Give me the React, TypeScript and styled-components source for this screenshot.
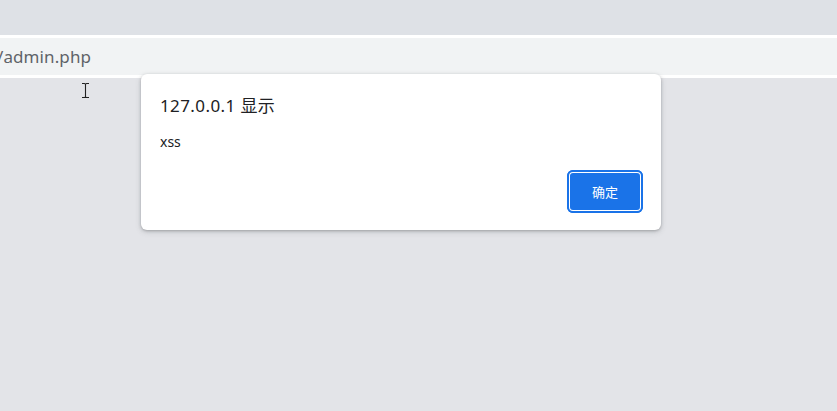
import React from "react";
import styled, { createGlobalStyle } from "styled-components";

const GlobalStyle = createGlobalStyle`
  html, body {
    margin: 0;
    padding: 0;
    background: #e3e4e8;
  }
  body {
    font-family: "Noto Sans", "Noto Sans CJK SC", sans-serif;
  }
`;

const App: React.FC = () => {
  return (
    <Screen>
      <GlobalStyle />
      <TabStrip />
      <Gap />
      <AddressBar>
        <Url>/admin.php</Url>
      </AddressBar>
      <Gap />
      <Page>
        <TextCursor width="9" height="17" viewBox="0 0 9 17">
          <path d="M1 1.5h2.5c.6 0 1 .4 1 1v12c0 .6.4 1 1 1H8M1 15.5h2.5c.6 0 1-.4 1-1M4.5 2.5c0-.6.4-1 1-1H8" fill="none" stroke="#222" strokeWidth="1.1" />
        </TextCursor>
      </Page>
      <Dialog>
        <Title>127.0.0.1 显示</Title>
        <Message>xss</Message>
        <Actions>
          <OkButton>确定</OkButton>
        </Actions>
      </Dialog>
    </Screen>
  );
};

export default App;

const Screen = styled.div`
  position: relative;
  display: flex;
  flex-direction: column;
  width: 837px;
  height: 411px;
  overflow: hidden;
`;

const TabStrip = styled.div`
  height: 35px;
  background: #dee1e6;
`;

const Gap = styled.div`
  height: 3px;
  background: #ffffff;
`;

const AddressBar = styled.div`
  display: flex;
  align-items: center;
  height: 37px;
  background: #f1f3f4;
`;

const Url = styled.span`
  margin-left: -3px;
  font-size: 17px;
  color: #5f6368;
  letter-spacing: 0.1px;
`;

const Page = styled.div`
  position: relative;
  flex: 1;
  background: #e3e4e8;
`;

const TextCursor = styled.svg`
  position: absolute;
  left: 81px;
  top: 4px;
`;

const Dialog = styled.div`
  position: absolute;
  left: 141px;
  top: 74px;
  width: 520px;
  height: 156px;
  box-sizing: border-box;
  padding: 20px 19px 18px 19px;
  display: flex;
  flex-direction: column;
  background: #ffffff;
  border-radius: 6px;
  box-shadow: 0 1px 3px rgba(60, 64, 67, 0.35), 0 2px 6px rgba(60, 64, 67, 0.15);
`;

const Title = styled.div`
  font-size: 17px;
  line-height: 24px;
  color: #202124;
  letter-spacing: 0.4px;
`;

const Message = styled.div`
  margin-top: 14px;
  font-size: 14px;
  line-height: 20px;
  color: #202124;
`;

const Actions = styled.div`
  display: flex;
  justify-content: flex-end;
  margin-top: auto;
`;

const OkButton = styled.button`
  width: 74px;
  height: 41px;
  box-sizing: border-box;
  border: 2px solid #ffffff;
  border-radius: 5px;
  outline: 2px solid #1a73e8;
  outline-offset: -1px;
  background: #1a73e8;
  color: #ffffff;
  font-family: "Noto Sans CJK SC", sans-serif;
  font-size: 13px;
  box-shadow: 0 0 0 1px #1a73e8;
  margin-right: 0;
`;
